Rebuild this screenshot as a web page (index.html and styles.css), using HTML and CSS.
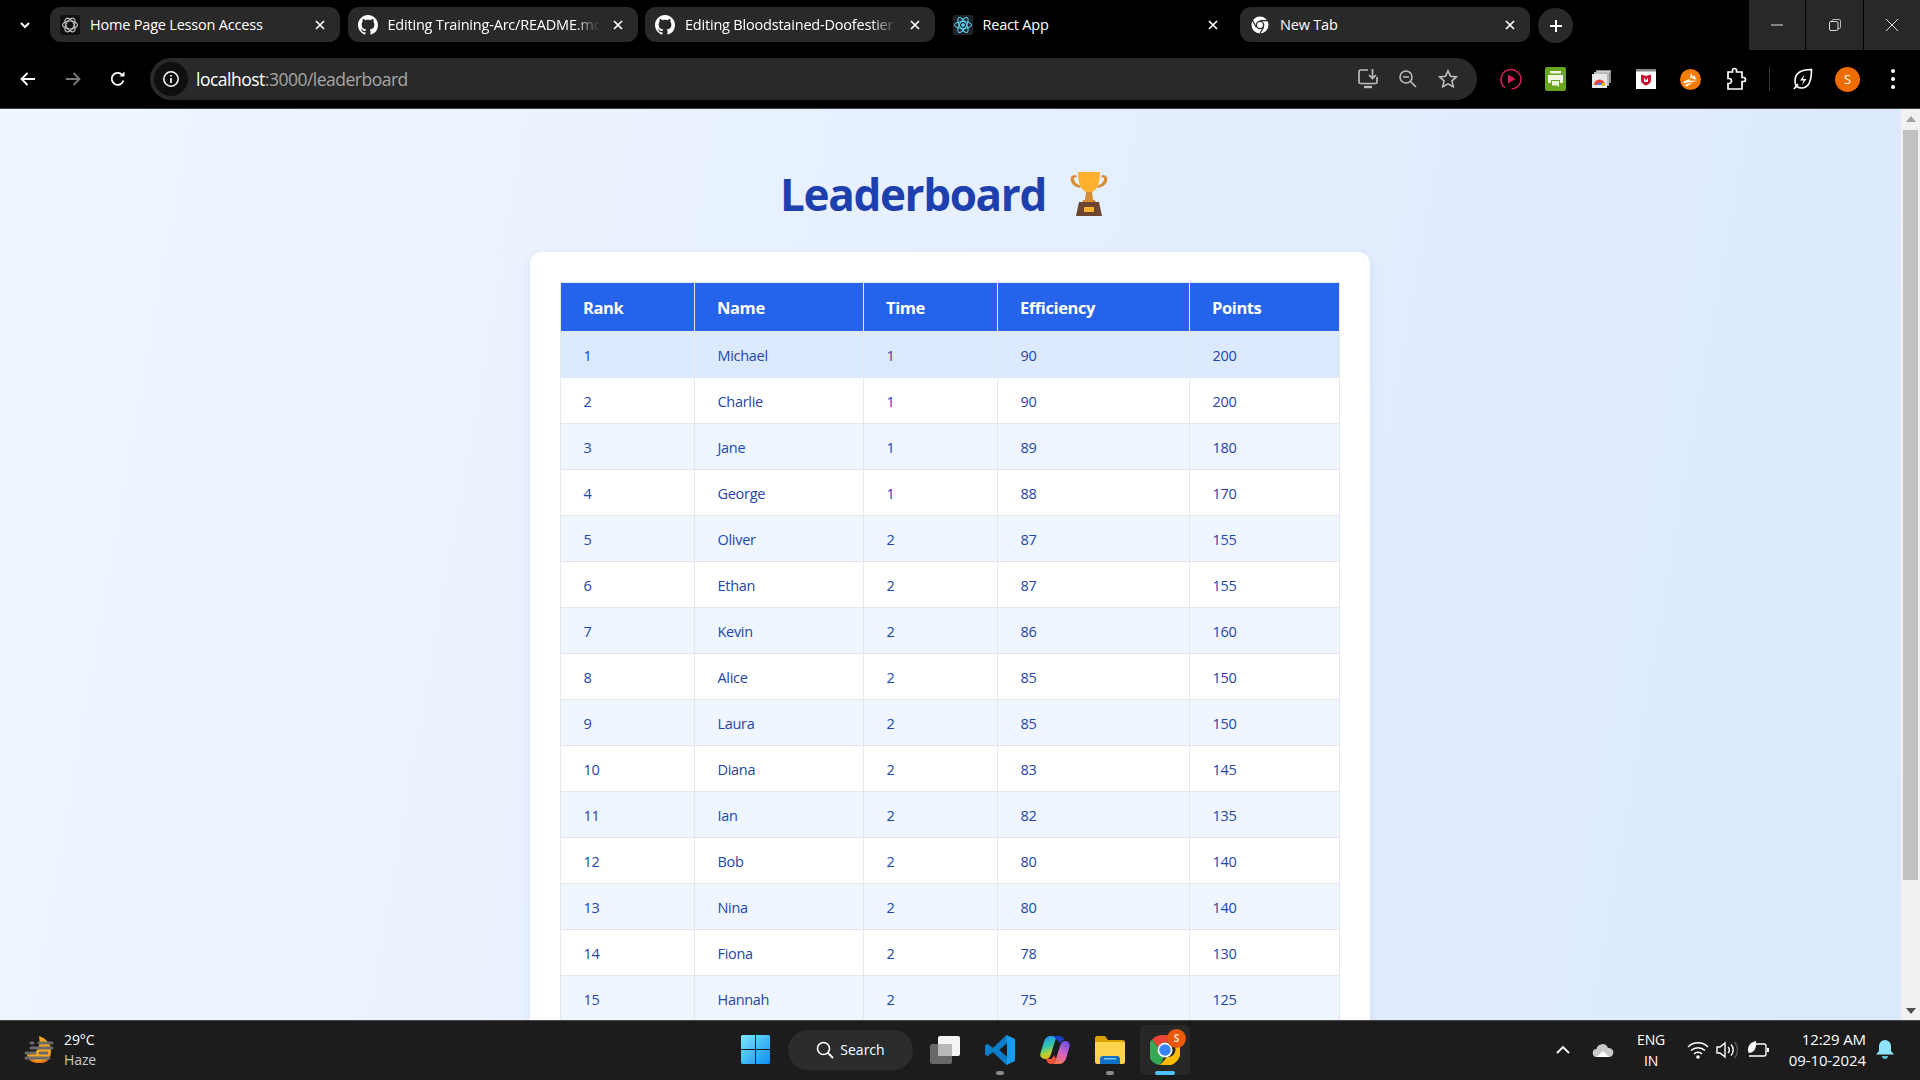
FILE: index.html
```html
<!DOCTYPE html>
<html lang="en">
<head>
<meta charset="utf-8">
<title>React App</title>
<link rel="stylesheet" href="styles.css">
</head>
<body>
<div class="screen">
  <header class="tabstrip">
    <div class="tab-caret"><svg width="14" height="14" viewBox="0 0 14 14"><path d="M3 5l4 4 4-4" fill="none" stroke="#fff" stroke-width="2"/></svg></div>
    <div class="tabs">
      <div class="tab">
        <svg class="fav" width="20" height="20" viewBox="0 0 20 20"><rect width="20" height="20" rx="3" fill="#111"/><g fill="none" stroke="#bbb" stroke-width="1.2"><ellipse cx="10" cy="10" rx="7.5" ry="4"/><ellipse cx="10" cy="10" rx="7.5" ry="4" transform="rotate(60 10 10)"/><ellipse cx="10" cy="10" rx="7.5" ry="4" transform="rotate(120 10 10)"/></g></svg>
        <span class="tab-title">Home Page Lesson Access</span>
        <svg class="tab-x" width="12" height="12" viewBox="0 0 12 12"><path d="M2 2l8 8M10 2l-8 8" stroke="#fff" stroke-width="1.7"/></svg>
      </div>
      <div class="tab">
        <svg class="fav" width="20" height="20" viewBox="0 0 16 16"><path fill="#fff" d="M8 0C3.58 0 0 3.58 0 8c0 3.54 2.29 6.53 5.47 7.59.4.07.55-.17.55-.38 0-.19-.01-.82-.01-1.49-2.01.37-2.53-.49-2.69-.94-.09-.23-.48-.94-.82-1.13-.28-.15-.68-.52-.01-.53.63-.01 1.08.58 1.23.82.72 1.21 1.87.87 2.33.66.07-.52.28-.87.51-1.07-1.78-.2-3.64-.89-3.64-3.95 0-.87.31-1.59.82-2.15-.08-.2-.36-1.02.08-2.12 0 0 .67-.21 2.2.82.64-.18 1.32-.27 2-.27.68 0 1.36.09 2 .27 1.53-1.04 2.2-.82 2.2-.82.44 1.1.16 1.92.08 2.12.51.56.82 1.27.82 2.15 0 3.07-1.87 3.75-3.65 3.95.29.25.54.73.54 1.48 0 1.07-.01 1.93-.01 2.2 0 .21.15.46.55.38A8.013 8.013 0 0016 8c0-4.42-3.58-8-8-8z"/></svg>
        <span class="tab-title fade">Editing Training-Arc/README.md</span>
        <svg class="tab-x" width="12" height="12" viewBox="0 0 12 12"><path d="M2 2l8 8M10 2l-8 8" stroke="#fff" stroke-width="1.7"/></svg>
      </div>
      <div class="tab">
        <svg class="fav" width="20" height="20" viewBox="0 0 16 16"><path fill="#fff" d="M8 0C3.58 0 0 3.58 0 8c0 3.54 2.29 6.53 5.47 7.59.4.07.55-.17.55-.38 0-.19-.01-.82-.01-1.49-2.01.37-2.53-.49-2.69-.94-.09-.23-.48-.94-.82-1.13-.28-.15-.68-.52-.01-.53.63-.01 1.08.58 1.23.82.72 1.21 1.87.87 2.33.66.07-.52.28-.87.51-1.07-1.78-.2-3.64-.89-3.64-3.95 0-.87.31-1.59.82-2.15-.08-.2-.36-1.02.08-2.12 0 0 .67-.21 2.2.82.64-.18 1.32-.27 2-.27.68 0 1.36.09 2 .27 1.53-1.04 2.2-.82 2.2-.82.44 1.1.16 1.92.08 2.12.51.56.82 1.27.82 2.15 0 3.07-1.87 3.75-3.65 3.95.29.25.54.73.54 1.48 0 1.07-.01 1.93-.01 2.2 0 .21.15.46.55.38A8.013 8.013 0 0016 8c0-4.42-3.58-8-8-8z"/></svg>
        <span class="tab-title fade">Editing Bloodstained-Doofestier</span>
        <svg class="tab-x" width="12" height="12" viewBox="0 0 12 12"><path d="M2 2l8 8M10 2l-8 8" stroke="#fff" stroke-width="1.7"/></svg>
      </div>
      <div class="tab tab-plain">
        <svg class="fav" width="20" height="20" viewBox="0 0 20 20"><rect width="20" height="20" rx="2" fill="#20232a"/><g fill="none" stroke="#61dafb" stroke-width="1"><ellipse cx="10" cy="10" rx="8.5" ry="3.4"/><ellipse cx="10" cy="10" rx="8.5" ry="3.4" transform="rotate(60 10 10)"/><ellipse cx="10" cy="10" rx="8.5" ry="3.4" transform="rotate(120 10 10)"/></g><circle cx="10" cy="10" r="1.8" fill="#61dafb"/></svg>
        <span class="tab-title">React App</span>
        <svg class="tab-x" width="12" height="12" viewBox="0 0 12 12"><path d="M2 2l8 8M10 2l-8 8" stroke="#fff" stroke-width="1.7"/></svg>
      </div>
      <div class="tab">
        <svg class="fav" width="20" height="20" viewBox="0 0 20 20"><circle cx="10" cy="10" r="8.5" fill="#fff"/><circle cx="10" cy="10" r="4.3" fill="#292929"/><circle cx="10" cy="10" r="3" fill="#fff"/><path d="M10 5.7h8M6.3 12.2L2.4 5.4M13.7 12.2L9.7 18.8" stroke="#292929" stroke-width="1.2"/></svg>
        <span class="tab-title">New Tab</span>
        <svg class="tab-x" width="12" height="12" viewBox="0 0 12 12"><path d="M2 2l8 8M10 2l-8 8" stroke="#fff" stroke-width="1.7"/></svg>
      </div>
    </div>
    <div class="newtab"><svg width="14" height="14" viewBox="0 0 14 14"><path d="M7 1v12M1 7h12" stroke="#fff" stroke-width="2"/></svg></div>
    <div class="winbtns">
      <div class="winbtn"><svg width="14" height="14" viewBox="0 0 14 14"><path d="M1 7h12" stroke="#ddd" stroke-width="1"/></svg></div>
      <div class="winbtn"><svg width="14" height="14" viewBox="0 0 14 14"><rect x="1.5" y="3.5" width="8.5" height="9" rx="1.5" fill="none" stroke="#ddd"/><path d="M4 3.500V2.700c0-.7.5-1.200 1.200-1.200h6c.7 0 1.300.6 1.300 1.300v6.500c0 .7-.5 1.200-1.200 1.200H10" fill="none" stroke="#ddd" stroke-width=".8"/></svg></div>
      <div class="winbtn"><svg width="14" height="14" viewBox="0 0 14 14"><path d="M1 1l12 12M13 1L1 13" stroke="#ddd" stroke-width="1"/></svg></div>
    </div>
  </header>

  <nav class="toolbar">
    <div class="tool"><svg width="18" height="18" viewBox="0 0 18 18"><path d="M16 9H3M8.5 3L2.5 9l6 6" fill="none" stroke="#fff" stroke-width="1.8"/></svg></div>
    <div class="tool"><svg width="18" height="18" viewBox="0 0 18 18"><path d="M2 9h13M9.500 3l6 6-6 6" fill="none" stroke="#7b7b7b" stroke-width="1.8"/></svg></div>
    <div class="tool"><svg width="18" height="18" viewBox="0 0 18 18"><path d="M14.500 10.500A6 6 0 1 1 13 4.600" fill="none" stroke="#fff" stroke-width="1.8"/><path d="M10.500 6.600h5v-5z" fill="#fff"/></svg></div>
    <div class="omnibox">
      <div class="site-info"><svg width="18" height="18" viewBox="0 0 18 18"><circle cx="9" cy="9" r="7.2" fill="none" stroke="#fff" stroke-width="1.5"/><path d="M9 8v5M9 5v1.600" stroke="#fff" stroke-width="1.7"/></svg></div>
      <div class="url"><span class="url-host">localhost</span>:3000/leaderboard</div>
      <div class="omni-icon"><svg width="22" height="22" viewBox="0 0 22 22"><path d="M11 2H3.500C2.700 2 2 2.700 2 3.500V14c0 .8.7 1.500 1.500 1.500h15c.8 0 1.500-.7 1.500-1.500V9" fill="none" stroke="#bdbdbd" stroke-width="1.7"/><path d="M7 19h8" stroke="#bdbdbd" stroke-width="2.4"/><path d="M15.500 1v9M12 7l3.500 3.500L19 7" fill="none" stroke="#bdbdbd" stroke-width="1.7"/></svg></div>
      <div class="omni-icon"><svg width="20" height="20" viewBox="0 0 20 20"><circle cx="8" cy="8" r="6" fill="none" stroke="#bdbdbd" stroke-width="1.6"/><path d="M5 8h6M12.500 12.500L18 18" stroke="#bdbdbd" stroke-width="1.6"/></svg></div>
      <div class="omni-icon"><svg width="20" height="20" viewBox="0 0 20 20"><path d="M10 1.800l2.500 5.400 5.800.7-4.300 4 1.200 5.800-5.200-2.900-5.200 2.900 1.200-5.800-4.300-4 5.800-.7z" fill="none" stroke="#bdbdbd" stroke-width="1.6"/></svg></div>
    </div>
    <div class="extensions">
      <div class="tool"><svg width="22" height="22" viewBox="0 0 22 22"><path d="M5 19.500A10 10 0 1 1 21 11c0 3.500-1.800 6.500-4.500 8.300-1.500.9-3 1.400-5 1.600" fill="none" stroke="#d81b60" stroke-width="1.5"/><path d="M8 6.500l7.500 4.500L8 15.500z" fill="#d81b60"/></svg></div>
      <div class="tool"><svg width="21" height="24" viewBox="0 0 21 24"><rect width="21" height="24" rx="2" fill="#6aa51e"/><path d="M5 4h11v2.500H5zM3 8h15v8h-3v-3H6v3H3z" fill="#eef6e0"/><path d="M7 14h7v6l-2-1.500H7z" fill="#eef6e0"/></svg></div>
      <div class="tool"><svg width="20" height="18" viewBox="0 0 20 18"><rect x="5" y="0" width="15" height="13" fill="#8a8a8a"/><rect x="6" y="1" width="13" height="2" fill="#cfcfcf"/><rect x="3" y="2" width="15" height="14" fill="#bbb"/><rect x="1" y="4" width="15" height="14" fill="#e8e8e8"/><path d="M3 15a5.500 5.500 0 0 1 11 0z" fill="#ea4335"/><path d="M6 15a2.500 2.500 0 0 1 5 0z" fill="#4285f4"/><rect x="11" y="13" width="3" height="3" fill="#fbbc05"/></svg></div>
      <div class="tool"><svg width="20" height="20" viewBox="0 0 20 20"><rect width="20" height="20" fill="#fff"/><rect width="20" height="2.500" fill="#888"/><path d="M5 5.500l5 1.500 5-1.500v6c0 2.500-2.500 4-5 5-2.500-1-5-2.500-5-5z" fill="#c8102e"/><path d="M8 8.500l2 3 2-3v4.500H8z" fill="#fff"/></svg></div>
      <div class="tool"><svg width="21" height="21" viewBox="0 0 21 21"><circle cx="10.500" cy="10.500" r="10.500" fill="#f57c00"/><path d="M11 3.500l1.800 4.800-2.800 1.500zM14 6l2.500 4.500-4.500-.5zM17.500 12l-7-.5-4.500 2.500zM3 13l6-3 1 2-6 2.500zM4 16l9-2.500-6 4z" fill="#fff"/></svg></div>
      <div class="tool"><svg width="22" height="24" viewBox="0 0 22 24"><path d="M3 5h4.500V3.500a2 2 0 0 1 4 0V5H17v5.500h1.500a2 2 0 0 1 0 4H17V22H3v-5.500h1a2.500 2.500 0 0 0 0-5H3z" fill="none" stroke="#fff" stroke-width="1.7"/></svg></div>
      <div class="tool-sep"></div>
      <div class="tool"><svg width="20" height="22" viewBox="0 0 20 22"><path d="M18.500 1.500C10 1.500 2 4 2 13c0 2 .6 4 1.700 5.500 1.500 1 3 1.500 5 1.500 8 0 9.800-8 9.800-18.500z" fill="none" stroke="#fff" stroke-width="1.6"/><path d="M11.500 6.500L7 12.500h3.500L9 17l4.500-6H10z" fill="#fff"/><path d="M1 21l4-5" stroke="#fff" stroke-width="1.6"/></svg></div>
      <div class="tool"><div class="avatar">S</div></div>
      <div class="tool"><svg width="6" height="22" viewBox="0 0 6 22"><circle cx="3" cy="3" r="2" fill="#fff"/><circle cx="3" cy="11" r="2" fill="#fff"/><circle cx="3" cy="19" r="2" fill="#fff"/></svg></div>
    </div>
  </nav>

  <div class="viewport">
    <main class="page">
      <h1 class="title"><span>Leaderboard</span><svg class="trophy" width="62" height="48" viewBox="0 0 62 48"><path d="M19 5c-5 0-6 3-5 6 1 4 5 6 9 7l1-2c-3-1-6-3-7-6-.6-2 .5-3 3-3zM45 5c5 0 6 3 5 6-1 4-5 6-9 7l-1-2c3-1 6-3 7-6 .6-2-.5-3-3-3z" fill="#d68c33" transform="translate(-1 0)"/><path d="M20 2h22c0 10-2 17-8 20h-6c-6-3-8-10-8-20z" fill="#fdb12f"/><path d="M28 22h6l1 8h-8z" fill="#d68c33"/><path d="M25 30h12l1 3h-14z" fill="#d68c33"/><path d="M21 32h20l3 14H18z" fill="#6d4530"/><rect x="26" y="37" width="10" height="5" rx="1" fill="#fdb12f"/></svg></h1>
      <section class="card">
        <table class="board">
          <colgroup><col class="c-rank"><col class="c-name"><col class="c-time"><col class="c-eff"><col class="c-pts"></colgroup>
          <thead><tr><th>Rank</th><th>Name</th><th>Time</th><th>Efficiency</th><th>Points</th></tr></thead>
          <tbody>
            <tr class="active"><td>1</td><td>Michael</td><td>1</td><td>90</td><td>200</td></tr>
            <tr><td>2</td><td>Charlie</td><td>1</td><td>90</td><td>200</td></tr>
            <tr><td>3</td><td>Jane</td><td>1</td><td>89</td><td>180</td></tr>
            <tr><td>4</td><td>George</td><td>1</td><td>88</td><td>170</td></tr>
            <tr><td>5</td><td>Oliver</td><td>2</td><td>87</td><td>155</td></tr>
            <tr><td>6</td><td>Ethan</td><td>2</td><td>87</td><td>155</td></tr>
            <tr><td>7</td><td>Kevin</td><td>2</td><td>86</td><td>160</td></tr>
            <tr><td>8</td><td>Alice</td><td>2</td><td>85</td><td>150</td></tr>
            <tr><td>9</td><td>Laura</td><td>2</td><td>85</td><td>150</td></tr>
            <tr><td>10</td><td>Diana</td><td>2</td><td>83</td><td>145</td></tr>
            <tr><td>11</td><td>Ian</td><td>2</td><td>82</td><td>135</td></tr>
            <tr><td>12</td><td>Bob</td><td>2</td><td>80</td><td>140</td></tr>
            <tr><td>13</td><td>Nina</td><td>2</td><td>80</td><td>140</td></tr>
            <tr><td>14</td><td>Fiona</td><td>2</td><td>78</td><td>130</td></tr>
            <tr><td>15</td><td>Hannah</td><td>2</td><td>75</td><td>125</td></tr>
          </tbody>
        </table>
      </section>
    </main>
    <aside class="scrollbar">
      <div class="sb-arrow"><svg width="10" height="6" viewBox="0 0 10 6"><path d="M5 0l5 6H0z" fill="#a3a3a3"/></svg></div>
      <div class="sb-track"><div class="sb-thumb"></div></div>
      <div class="sb-arrow"><svg width="10" height="6" viewBox="0 0 10 6"><path d="M0 0h10L5 6z" fill="#505050"/></svg></div>
    </aside>
  </div>

  <footer class="taskbar">
    <div class="tb-left">
      <svg width="32" height="30" viewBox="0 0 32 30"><path d="M15 1c6 2 12 7 12 15 0 7-5 12-12 12S3 24 3 19c6 2 15-4 12-18z" fill="#f7a823"/><path d="M3 19c4 9 18 10 24 0-2 8-6 9-12 9S5 26 3 19z" fill="#e9771c"/><g stroke="#6b6b6b" stroke-width="3" stroke-linecap="round"><path d="M7 8h2M15 8h13M7 13h21M2 18h9M16 18h7M2 23h23"/></g></svg>
      <div class="weather"><div>29°C</div><div class="weather-sub">Haze</div></div>
    </div>
    <div class="tb-center">
      <svg class="winlogo" width="29" height="29" viewBox="0 0 29 29"><defs><linearGradient id="wl" x1="0" y1="0" x2="1" y2="1"><stop offset="0" stop-color="#7ee8fb"/><stop offset="1" stop-color="#0d8df0"/></linearGradient></defs><path d="M0 1.500C0 .7.700 0 1.500 0H14v14H0zM15 0h12.500c.8 0 1.500.7 1.500 1.500V14H15zM0 15h14v14H1.500C.7 29 0 28.300 0 27.500zM15 15h14v12.500c0 .8-.7 1.500-1.500 1.500H15z" fill="url(#wl)"/></svg>
      <div class="tb-search"><svg width="18" height="18" viewBox="0 0 18 18"><circle cx="7.500" cy="7.500" r="6" fill="none" stroke="#fff" stroke-width="1.6"/><path d="M12 12l5 5" stroke="#fff" stroke-width="1.8"/></svg><span>Search</span></div>
      <div class="app"><svg width="30" height="28" viewBox="0 0 30 28"><rect y="8" width="22" height="20" rx="2" fill="#686868"/><rect x="8" width="22" height="20" rx="2" fill="#f4f4f4"/><rect x="8" y="8" width="14" height="12" fill="#b9b9b9"/></svg></div>
      <div class="app open"><svg width="30" height="30" viewBox="0 0 30 30"><path d="M21.500 0L30 4v22l-8.500 4L8 17l-5.500 4L0 19.500V10.500L2.500 9 8 13zM22 8l-8 7 8 7z" fill="#1a9bef" fill-rule="evenodd"/><path d="M21.500 0L8 13 2.500 9 0 10.500v9L2.500 21 8 17l13.500 13L22 22l-8-7 8-7z" fill="#0065a9" opacity=".55"/></svg></div>
      <div class="app"><svg width="30" height="30" viewBox="0 0 30 30"><defs><linearGradient id="cp1" x1="0.2" y1="0" x2="0.5" y2="1"><stop offset="0" stop-color="#1f8ff0"/><stop offset=".45" stop-color="#35c6b0"/><stop offset=".75" stop-color="#b6d531"/><stop offset="1" stop-color="#f8a51b"/></linearGradient><linearGradient id="cp2" x1="0.7" y1="0" x2="0.3" y2="1"><stop offset="0" stop-color="#6a4fe0"/><stop offset=".5" stop-color="#d763c4"/><stop offset="1" stop-color="#f6784a"/></linearGradient></defs><path d="M11 1h9c-3 0-4 2-5 5l-4 13c-1 3-2 5-5 5H4.500C1.500 24-.5 21 .5 18L4 6.500C5 3 7.500 1 11 1z" fill="url(#cp1)"/><path d="M19 29h-8c3 0 4-2 5-5l4-13c1-3 2-5 5-5h.5c3 0 5 3 4 6L26 23.500C25 27 22.500 29 19 29z" fill="url(#cp2)"/><path d="M13 1h7c2 0 4 2 4.500 4H24c-2 0-3 1-4 3z" fill="#1b3fc4"/><path d="M6 24h4c1.500 0 3-1.500 4-4l2 4c-1 3-3 5-5 5-2.500 0-4-2-5-5z" fill="#f0543c"/></svg></div>
      <div class="app open"><svg width="30" height="28" viewBox="0 0 30 28"><path d="M0 2c0-1 1-2 2-2h8l3 4h15c1 0 2 1 2 2v3H0z" fill="#d9a200"/><path d="M0 6h30v20c0 1-1 2-2 2H2c-1 0-2-1-2-2z" fill="#fdd34c"/><path d="M5 28v-5c0-1.500 1-3 3-3h14c2 0 3 1.500 3 3v5z" fill="#0f72c4"/><rect x="9" y="22" width="12" height="1.500" fill="#7cc3f2"/></svg></div>
      <div class="app app-active">
        <svg width="30" height="30" viewBox="0 0 30 30"><path d="M15 0a15 15 0 0 1 13 7.500H15a7.500 7.500 0 0 0-7 5L2 4.500A15 15 0 0 1 15 0z" fill="#ea4335"/><path d="M2 4.500L8 12.500a7.500 7.500 0 0 0 6 9.800L10 30A15 15 0 0 1 2 4.500z" fill="#34a853"/><path d="M28 7.500A15 15 0 0 1 10 30l7-8a7.500 7.500 0 0 0 3.500-14.500z" fill="#fbbc05"/><circle cx="15" cy="15" r="7.500" fill="#fff"/><circle cx="15" cy="15" r="5.800" fill="#3b82f6"/></svg>
        <div class="badge">S</div>
      </div>
    </div>
    <div class="tb-right">
      <div class="tray tray-chev"><svg width="14" height="9" viewBox="0 0 14 9"><path d="M1 8l6-6 6 6" fill="none" stroke="#fff" stroke-width="1.8"/></svg></div>
      <div class="tray tray-cloud"><svg width="22" height="14" viewBox="0 0 22 14"><path d="M5 14a4 4 0 0 1-.5-8A6 6 0 0 1 16 5a4.500 4.500 0 0 1 1.500 9z" fill="#c9c9c9"/><path d="M5 14l6-6 6 6z" fill="#fff"/></svg></div>
      <div class="lang"><div>ENG</div><div>IN</div></div>
      <div class="tray tray-wifi"><svg width="22" height="18" viewBox="0 0 22 18"><g fill="none" stroke="#fff" stroke-width="1.5"><path d="M1 6a14 14 0 0 1 20 0M4 9.500a10 10 0 0 1 14 0M7 13a5.500 5.500 0 0 1 8 0"/></g><circle cx="11" cy="16" r="1.800" fill="#fff"/></svg></div>
      <div class="tray tray-vol"><svg width="22" height="18" viewBox="0 0 22 18"><path d="M1 6h3l5-4v14l-5-4H1z" fill="none" stroke="#fff" stroke-width="1.4"/><path d="M12 6a4 4 0 0 1 0 6" fill="none" stroke="#fff" stroke-width="1.4"/><path d="M15 3.500a8 8 0 0 1 0 11" fill="none" stroke="#fff" stroke-width="1.4"/><path d="M18.500 1a12 12 0 0 1 0 16" fill="none" stroke="#555" stroke-width="1.4"/></svg></div>
      <div class="tray tray-batt"><svg width="22" height="18" viewBox="0 0 22 18"><path d="M9 3h8c1 0 2 1 2 2v8c0 1-1 2-2 2H2" fill="none" stroke="#fff" stroke-width="1.4"/><rect x="20" y="7" width="2" height="4" fill="#fff"/><path d="M9 0C4 1 1 4 1 9c0 1 .3 2 .8 3C7 12 10 7 9 0z" fill="#fff"/></svg></div>
      <div class="clock"><div>12:29 AM</div><div>09-10-2024</div></div>
      <div class="tray tray-bell"><svg width="18" height="20" viewBox="0 0 18 20"><path d="M9 0a6 6 0 0 1 6 6v5l3 3.500H0L3 11V6a6 6 0 0 1 6-6z" fill="#8ee5fb"/><path d="M6 16h6a3 3 0 0 1-6 0z" fill="#5bbcd6"/></svg></div>
    </div>
  </footer>
</div>
</body>
</html>
```
FILE: styles.css
```css
* { box-sizing: border-box; }
html, body { margin: 0; height: 100%; overflow: hidden; }
body { font-family: "Open Sans", "Noto Sans", sans-serif; color: #fff; background: #000; }
svg { display: block; flex: none; }

.screen { display: flex; flex-direction: column; width: 1920px; height: 1080px; }

/* tab strip */
.tabstrip { display: flex; align-items: flex-start; height: 50px; background: #000; flex: none; }
.tab-caret { width: 50px; height: 50px; display: flex; align-items: center; justify-content: center; }
.tabs { display: flex; gap: 7.5px; margin-top: 7px; }
.tab { width: 290px; height: 35px; background: #292929; border-radius: 11px; display: flex; align-items: center; padding: 0 14px 0 10px; font-size: 14.5px; letter-spacing: -0.2px; }
.tab-plain { background: transparent; }
.fav { margin-right: 10px; }
.tab-title { flex: 1; white-space: nowrap; overflow: hidden; }
.tab-title.fade { -webkit-mask-image: linear-gradient(to right, #000 86%, transparent 98%); mask-image: linear-gradient(to right, #000 86%, transparent 98%); }
.tab-x { margin-left: 8px; }
.newtab { width: 35px; height: 35px; margin: 8px 0 0 8px; border-radius: 50%; background: #292929; display: flex; align-items: center; justify-content: center; }
.winbtns { display: flex; gap: 1px; margin-left: auto; }
.winbtn { width: 56.3px; height: 50px; background: #282828; display: flex; align-items: center; justify-content: center; }

/* toolbar */
.toolbar { display: flex; align-items: flex-start; height: 59px; padding-left: 5px; padding-top: 8px; background: #000; border-bottom: 1px solid #3d4043; flex: none; }
.tool { width: 45px; height: 42px; display: flex; align-items: center; justify-content: center; flex: none; }
.omnibox { width: 1327px; height: 42px; margin-left: 10px; background: #292929; border-radius: 21px; display: flex; align-items: center; padding: 0 9px 0 4px; }
.site-info { width: 34px; height: 34px; border-radius: 50%; background: #0f0f0f; display: flex; align-items: center; justify-content: center; margin-right: 8px; }
.url { flex: 1; font-size: 17.5px; letter-spacing: -0.5px; color: #a6a6a6; white-space: nowrap; }
.url-host { color: #fff; }
.omni-icon { width: 40px; height: 42px; display: flex; align-items: center; justify-content: center; }
.extensions { display: flex; align-items: center; margin-left: 11px; }
.tool-sep { width: 1px; height: 24px; background: #3a3a3a; margin: 0 10px 0 11px; }
.avatar { width: 25px; height: 25px; border-radius: 50%; background: #ef6c00; font-size: 13px; display: flex; align-items: center; justify-content: center; }

/* page */
.viewport { flex: 1; min-height: 0; display: flex; }
.page { flex: 1; min-width: 0; overflow: hidden; background: linear-gradient(100deg, #f0f6ff 0%, #dbe9fd 100%); display: flex; flex-direction: column; align-items: center; padding: 55px 1px 0 0; }
.title { margin: 0 0 28px; height: 62px; display: flex; align-items: center; font-size: 44px; font-weight: 700; color: #1e40af; letter-spacing: -1.35px; }
.trophy { margin-left: 12px; }
.card { width: 840px; flex: none; background: #fff; border-radius: 12px; padding: 30px 30px 31px; box-shadow: 0 4px 12px rgba(30, 64, 175, .08); }
.board { width: 779px; border-collapse: collapse; table-layout: fixed; }
.c-rank { width: 134px; }
.c-name { width: 169px; }
.c-time { width: 134px; }
.c-eff { width: 192px; }
.c-pts { width: 150px; }
.board th { height: 49px; padding: 0 22px; text-align: left; font-size: 16.5px; font-weight: 700; color: #fff; background: #2563eb; border: 1px solid #e5e7eb; letter-spacing: -0.4px; }
.board td { height: 46px; padding: 1px 22.5px 0; font-size: 14.5px; color: #2446a8; border: 1px solid #e5e7eb; letter-spacing: -0.3px; }
.board tbody tr:nth-child(odd) { background: #eff6ff; }
.board tbody tr:nth-child(even) { background: #fff; }
.board tbody tr.active { background: #dbeafe; }

/* scrollbar */
.scrollbar { width: 19px; flex: none; background: #f1f1f1; display: flex; flex-direction: column; }
.sb-arrow { height: 19px; display: flex; align-items: center; justify-content: center; flex: none; }
.sb-track { flex: 1; padding: 2px 2px 0; }
.sb-thumb { height: 750px; background: #c1c1c1; }

/* taskbar */
.taskbar { display: grid; grid-template-columns: 741px auto 1fr; height: 60px; padding-bottom: 2px; background: #1c1c1c; border-top: 1px solid #45474a; flex: none; }
.tb-left { display: flex; align-items: center; gap: 8px; padding-left: 24px; }
.weather { font-size: 14px; line-height: 20px; letter-spacing: -0.1px; }
.weather-sub { color: #c8c8c8; }
.tb-center { display: flex; align-items: center; }
.winlogo { margin-right: 18px; }
.tb-search { width: 125px; height: 40px; border-radius: 20px; background: #2c2c2c; display: flex; align-items: center; justify-content: center; gap: 6px; font-size: 14px; margin-right: 7px; }
.app { width: 50px; height: 50px; margin-right: 5px; display: flex; align-items: center; justify-content: center; position: relative; border-radius: 5px; }
.app.open::after, .app-active::after { content: ""; position: absolute; bottom: 0; left: 21px; width: 8px; height: 4px; border-radius: 2px; background: #8a8a8a; }
.app-active { background: #272727; margin-right: 0; }
.app-active::after { left: 15px; width: 20px; background: #4cc2ff; }
.badge { position: absolute; top: 4px; right: 4px; width: 19px; height: 19px; border-radius: 50%; background: #e8590c; font-size: 10px; font-weight: 700; color: #ffd9c2; display: flex; align-items: center; justify-content: center; }
.tb-right { display: flex; align-items: center; justify-content: flex-end; padding-right: 23px; }
.tray { display: flex; align-items: center; justify-content: center; width: 26px; height: 26px; }
.tray-cloud { margin: 0 14px 0 14px; }
.lang { width: 42px; text-align: center; font-size: 14px; line-height: 21px; margin-right: 13px; letter-spacing: -0.2px; }
.tray-vol { margin: 0 3px; }
.tray-batt { margin-left: 2px; }
.clock { width: 95px; text-align: right; font-size: 15px; line-height: 21px; letter-spacing: -0.1px; }
.tray-bell { margin-left: 7px; width: 24px; }
```
